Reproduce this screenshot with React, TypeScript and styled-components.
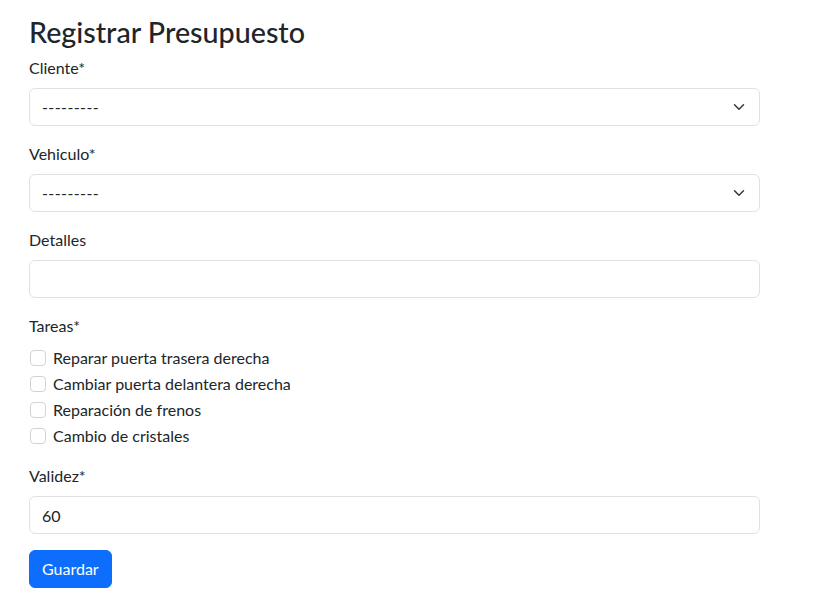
import React from 'react';
import styled, { createGlobalStyle } from 'styled-components';

const GlobalStyle = createGlobalStyle`
  *, *::before, *::after { box-sizing: border-box; }
  body {
    margin: 0;
    background: #fff;
    color: #212529;
    font-family: Lato, "Open Sans", sans-serif;
    font-size: 16px;
    line-height: 1.5;
  }
`;

const chevron =
  "url(\"data:image/svg+xml,%3csvg xmlns='http://www.w3.org/2000/svg' viewBox='0 0 16 16'%3e%3cpath fill='none' stroke='%23343a40' stroke-linecap='round' stroke-linejoin='round' stroke-width='2' d='m2 5 6 6 6-6'/%3e%3c/svg%3e\")";

const Page = styled.main`
  padding: 15px 0 0 29px;
`;

const Title = styled.h2`
  margin: 0 0 7px;
  font-size: 28.68px;
  font-weight: 500;
  line-height: 1.2;
`;

const Form = styled.form`
  width: 731px;
`;

const Field = styled.div`
  margin-bottom: 16px;
`;

const Label = styled.label`
  display: inline-block;
  margin-bottom: 8px;
`;

const controlBase = `
  display: block;
  width: 100%;
  height: 38px;
  padding: 6px 12px;
  font: inherit;
  color: #212529;
  background-color: #fff;
  border: 1px solid #dee2e6;
  border-radius: 6px;
  outline: none;
  appearance: none;
`;

const Select = styled.select`
  ${controlBase}
  padding-right: 36px;
  letter-spacing: 0.4px;
  background-image: ${chevron};
  background-repeat: no-repeat;
  background-position: right 12px center;
  background-size: 16px 12px;
`;

const Input = styled.input`
  ${controlBase}
`;

const Check = styled.div`
  display: flex;
  align-items: flex-start;
  min-height: 24px;
  margin-bottom: 2px;
  padding-left: 1px;
`;

const Box = styled.input`
  flex: none;
  width: 16px;
  height: 16px;
  margin: 4px 7px 0 0;
  appearance: none;
  background: #fff;
  border: 1px solid #d0d4d8;
  border-radius: 4px;
`;

const Button = styled.button`
  height: 38px;
  padding: 6px 12px;
  font: inherit;
  color: #fff;
  background: #0d6efd;
  border: 1px solid #0d6efd;
  border-radius: 6px;
`;

const tareas = [
  'Reparar puerta trasera derecha',
  'Cambiar puerta delantera derecha',
  'Reparación de frenos',
  'Cambio de cristales',
];

export default function App() {
  return (
    <Page>
      <GlobalStyle />
      <Title>Registrar Presupuesto</Title>
      <Form onSubmit={(e) => e.preventDefault()}>
        <Field>
          <Label htmlFor="cliente">Cliente*</Label>
          <Select id="cliente" defaultValue="">
            <option value="">---------</option>
          </Select>
        </Field>
        <Field>
          <Label htmlFor="vehiculo">Vehiculo*</Label>
          <Select id="vehiculo" defaultValue="">
            <option value="">---------</option>
          </Select>
        </Field>
        <Field>
          <Label htmlFor="detalles">Detalles</Label>
          <Input id="detalles" type="text" />
        </Field>
        <Field>
          <Label>Tareas*</Label>
          {tareas.map((t, i) => (
            <Check key={t}>
              <Box type="checkbox" id={`tarea-${i}`} />
              <label htmlFor={`tarea-${i}`}>{t}</label>
            </Check>
          ))}
        </Field>
        <Field>
          <Label htmlFor="validez">Validez*</Label>
          <Input id="validez" type="number" defaultValue={60} />
        </Field>
        <Button type="submit">Guardar</Button>
      </Form>
    </Page>
  );
}
